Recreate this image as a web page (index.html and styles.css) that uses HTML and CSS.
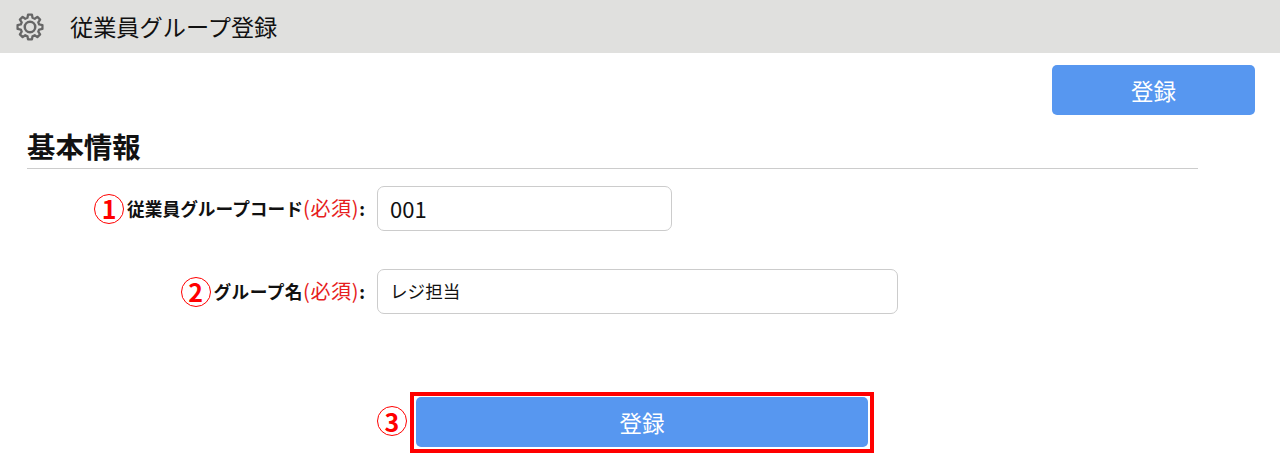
FILE: index.html
```html
<!DOCTYPE html>
<html lang="ja">
<head>
  <meta charset="UTF-8" />
  <meta name="viewport" content="width=device-width, initial-scale=1.0" />
  <title>従業員グループ登録</title>
  <link rel="stylesheet" href="styles.css">
</head>
<body>
  <header class="page-header">
    <svg class="gear" viewBox="0 0 24 24" width="30" height="30" fill="none" stroke="#666" stroke-width="2" stroke-linejoin="round">
      <path d="M10.3 2.2h3.4l.5 2.8 1.9.8 2.3-1.6 2.4 2.4-1.6 2.3.8 1.9 2.8.5v3.4l-2.8.5-.8 1.9 1.6 2.3-2.4 2.4-2.3-1.6-1.9.8-.5 2.8h-3.4l-.5-2.8-1.9-.8-2.3 1.6-2.4-2.4 1.6-2.3-.8-1.9-2.8-.5v-3.4l2.8-.5.8-1.9-1.6-2.3 2.4-2.4 2.3 1.6 1.9-.8z" transform="translate(12 12) scale(.92) translate(-12 -13)"/>
      <circle cx="12" cy="12" r="4.2"/>
    </svg>
    <h1>従業員グループ登録</h1>
  </header>

  <div class="top-actions">
    <button class="btn top-btn">登録</button>
  </div>

  <section class="section">
    <h2>基本情報</h2>

    <div class="form-row">
      <span class="mark">1</span>
      <label>従業員グループコード<span class="required">(必須)</span>:</label>
      <input class="code-input" type="text" value="001" />
    </div>

    <div class="form-row name-row">
      <span class="mark">2</span>
      <label><span class="name-label">グループ名</span><span class="required">(必須)</span>:</label>
      <input class="name-input" type="text" value="レジ担当" />
    </div>
  </section>

  <div class="bottom-actions">
    <span class="mark bottom-mark">3</span>
    <div class="highlight">
      <button class="btn bottom-btn">登録</button>
    </div>
  </div>
</body>
</html>
```

FILE: styles.css
```css
:root {
  --header-color: #e0e0de;
  --button-color: #5797f0;
  --border-color: #cccccc;
  --red: #ff0000;
}

* {
  box-sizing: border-box;
}

body {
  margin: 0;
  background: #fff;
  color: #111;
  font-family: "Noto Sans CJK JP", "Noto Sans", sans-serif;
  overflow: hidden;
}

.page-header {
  display: flex;
  align-items: center;
  height: 53px;
  padding-left: 15px;
  background: var(--header-color);
}

.page-header h1 {
  margin: 0 0 0 25px;
  font-size: 23.2px;
  font-weight: 400;
  line-height: 1;
}

.gear {
  display: block;
}

.top-actions {
  display: flex;
  justify-content: flex-end;
  padding: 12px 25px 0 0;
}

.btn {
  border: none;
  border-radius: 5px;
  background: var(--button-color);
  color: #fff;
  font-family: inherit;
  font-size: 22.5px;
  line-height: 1;
}

.top-btn {
  width: 203px;
  height: 50px;
}

.section {
  width: 1171px;
  margin: 14px 0 0 27px;
}

.section h2 {
  margin: 0;
  height: 40px;
  padding-top: 2px;
  border-bottom: 1px solid var(--border-color);
  font-size: 28.4px;
  font-weight: 700;
  line-height: 30px;
}

.form-row {
  position: relative;
  display: flex;
  align-items: center;
  justify-content: flex-end;
  width: 338px;
  height: 45px;
  margin-top: 17px;
}

.name-row {
  margin-top: 38px;
}

.form-row label {
  margin-bottom: 3px;
  font-size: 17.7px;
  font-weight: 700;
  white-space: nowrap;
}

.name-label {
  letter-spacing: 0.4px;
}

.required {
  color: #e62020;
  font-size: 20px;
  font-weight: 400;
  letter-spacing: 0.7px;
}

.form-row input {
  position: absolute;
  left: 350px;
  top: 0;
  height: 45px;
  padding: 0 12px 2px;
  border: 1px solid var(--border-color);
  border-radius: 7px;
  background: #fff;
  color: #111;
  font-family: inherit;
}

.code-input {
  width: 295px;
  font-size: 22px;
}

.name-input {
  width: 521px;
  font-size: 17.6px;
}

.mark {
  display: flex;
  align-items: center;
  justify-content: center;
  flex: none;
  width: 30px;
  height: 30px;
  border: 1px solid var(--red);
  border-radius: 50%;
  color: var(--red);
  font-size: 25px;
  font-weight: 700;
  line-height: 1;
}

.form-row .mark {
  margin-right: 3px;
}

.bottom-actions {
  display: flex;
  align-items: center;
  margin: 78px 0 0 377px;
}

.bottom-mark {
  margin: 0 3px 3px 0;
}

.highlight {
  width: 464px;
  height: 61px;
  padding: 1px 2px;
  border: 4px solid var(--red);
}

.bottom-btn {
  display: block;
  width: 452px;
  height: 50px;
}
```
